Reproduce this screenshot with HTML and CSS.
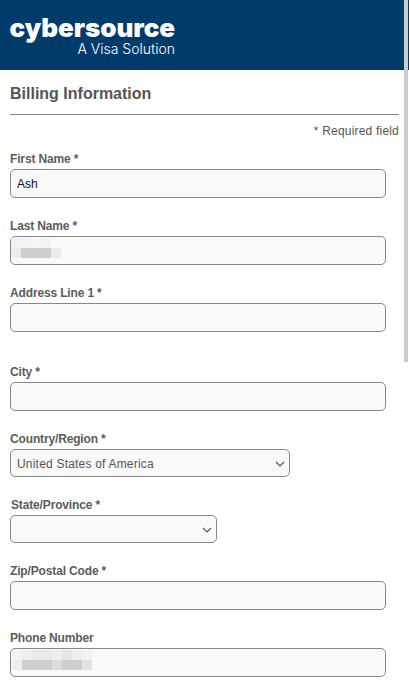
FILE: index.html
```html
<!DOCTYPE html>
<html lang="en">
<head>
  <meta charset="UTF-8">
  <title>Billing Information</title>
  <link rel="stylesheet" href="styles.css">
</head>
<body>

  <!-- Header -->
  <header class="site-header">
    <div class="logo">
      <span class="logo-name">cybersource</span>
      <span class="logo-tag">A Visa Solution</span>
    </div>
  </header>

  <!-- Billing form -->
  <main class="content">
    <h2 class="section-title">Billing Information</h2>
    <p class="required-note">* Required field</p>

    <form class="billing-form">
      <div class="field">
        <label for="first-name">First Name *</label>
        <input type="text" id="first-name" value="Ash">
      </div>

      <div class="field">
        <label for="last-name">Last Name *</label>
        <div class="input-wrap">
          <input type="text" id="last-name">
          <svg class="redacted" width="52" height="20" viewBox="0 0 52 20" aria-hidden="true">
            <rect x="0" y="0" width="20" height="10" fill="#f2f2f2"/>
            <rect x="20" y="0" width="10" height="10" fill="#f6f6f6"/>
            <rect x="30" y="0" width="10" height="10" fill="#f2f2f2"/>
            <rect x="0" y="10" width="10" height="10" fill="#ececec"/>
            <rect x="10" y="10" width="30" height="10" fill="#cfcfcf"/>
            <rect x="40" y="10" width="10" height="10" fill="#ebebeb"/>
          </svg>
        </div>
      </div>

      <div class="field field-tall">
        <label for="address-1">Address Line 1 *</label>
        <input type="text" id="address-1">
      </div>

      <div class="field">
        <label for="city">City *</label>
        <input type="text" id="city">
      </div>

      <div class="field field-select">
        <label for="country">Country/Region *</label>
        <div class="select-wrap select-country">
          <select id="country">
            <option>United States of America</option>
          </select>
          <svg class="chevron" width="10" height="6" viewBox="0 0 10 6" aria-hidden="true">
            <path d="M1 1l4 4 4-4" fill="none" stroke="#555" stroke-width="1.2"/>
          </svg>
        </div>
      </div>

      <div class="field field-select">
        <label for="state" class="label-state">State/Province *</label>
        <div class="select-wrap select-state">
          <select id="state">
            <option></option>
          </select>
          <svg class="chevron" width="10" height="6" viewBox="0 0 10 6" aria-hidden="true">
            <path d="M1 1l4 4 4-4" fill="none" stroke="#555" stroke-width="1.2"/>
          </svg>
        </div>
      </div>

      <div class="field field-low">
        <label for="zip">Zip/Postal Code *</label>
        <input type="text" id="zip">
      </div>

      <div class="field field-low">
        <label for="phone">Phone Number</label>
        <div class="input-wrap">
          <input type="text" id="phone">
          <svg class="redacted redacted-phone" width="82" height="20" viewBox="0 0 82 20" aria-hidden="true">
            <rect x="0" y="0" width="10" height="10" fill="#f3f3f3"/>
            <rect x="10" y="0" width="10" height="10" fill="#efefef"/>
            <rect x="20" y="0" width="20" height="10" fill="#eaeaea"/>
            <rect x="40" y="0" width="10" height="10" fill="#eeeeee"/>
            <rect x="50" y="0" width="10" height="10" fill="#e6e6e6"/>
            <rect x="60" y="0" width="10" height="10" fill="#eeeeee"/>
            <rect x="70" y="0" width="10" height="10" fill="#f2f2f2"/>
            <rect x="0" y="10" width="10" height="10" fill="#eeeeee"/>
            <rect x="10" y="10" width="30" height="10" fill="#cfcfcf"/>
            <rect x="40" y="10" width="10" height="10" fill="#dddddd"/>
            <rect x="50" y="10" width="20" height="10" fill="#cfcfcf"/>
            <rect x="70" y="10" width="10" height="10" fill="#e3e3e3"/>
          </svg>
        </div>
      </div>
    </form>
  </main>

  <div class="scroll-thumb"></div>

</body>
</html>
```

FILE: styles.css
```css
html, body {
  height: 100%;
  overflow: hidden;
}

body {
  margin: 0;
  font-family: "Liberation Sans", Arial, sans-serif;
  color: #555;
  background-color: #fff;
}

.site-header {
  height: 70px;
  background-color: #003c6b;
  padding: 15px 0 0 10px;
  box-sizing: border-box;
}

.logo {
  display: inline-flex;
  flex-direction: column;
  align-items: flex-end;
  width: 165px;
  color: #fff;
}

.logo-name {
  font-family: Inter, sans-serif;
  font-weight: 900;
  font-size: 26px;
  line-height: 26px;
  letter-spacing: -0.05px;
  white-space: nowrap;
}

.logo-tag {
  font-family: Inter, sans-serif;
  font-weight: 300;
  font-size: 14px;
  line-height: 16px;
  white-space: nowrap;
}

.content {
  padding: 0 10px;
}

.section-title {
  margin: 0;
  padding: 14px 0 10px;
  font-size: 16px;
  line-height: 20px;
  font-weight: bold;
  border-bottom: 1px solid #888;
}

.required-note {
  margin: 0;
  padding-top: 9px;
  font-size: 12px;
  line-height: 14px;
  letter-spacing: 0.2px;
  text-align: right;
}

.billing-form {
  padding-top: 13px;
}

.field {
  margin-bottom: 20px;
}

.field-tall {
  margin-bottom: 32px;
}

.field-select {
  margin-bottom: 21px;
}

.field label {
  display: block;
  padding-top: 1px;
  margin-bottom: 3px;
  font-size: 12px;
  line-height: 14px;
  letter-spacing: -0.15px;
  font-weight: bold;
  color: #5c5c5c;
}

.field .label-state {
  margin-left: 1px;
  padding-top: 0;
}

.field-low {
  margin-bottom: 21px;
}

.field-low label {
  padding-top: 0;
}

.input-wrap {
  position: relative;
  width: 376px;
}

input,
select {
  display: block;
  box-sizing: border-box;
  border: 1px solid #888;
  border-radius: 5px;
  background-color: #f9f9f9;
  font-family: "Liberation Sans", Arial, sans-serif;
  font-size: 12px;
  color: #111;
}

input {
  width: 376px;
  height: 29px;
  padding: 0 6px;
}

select {
  appearance: none;
  width: 100%;
  height: 28px;
  padding: 1px 6px 0;
  letter-spacing: 0.2px;
  color: #555;
}

.select-wrap {
  position: relative;
}

.select-country {
  width: 280px;
}

.select-state {
  width: 207px;
}

.chevron {
  position: absolute;
  right: 5px;
  top: 12px;
  pointer-events: none;
}

.redacted {
  position: absolute;
  left: 1px;
  top: 2px;
}

.redacted-phone {
  left: 2px;
}

.scroll-thumb {
  position: fixed;
  top: 0;
  right: 1px;
  width: 4px;
  height: 362px;
  background-color: #ccc;
}
```
